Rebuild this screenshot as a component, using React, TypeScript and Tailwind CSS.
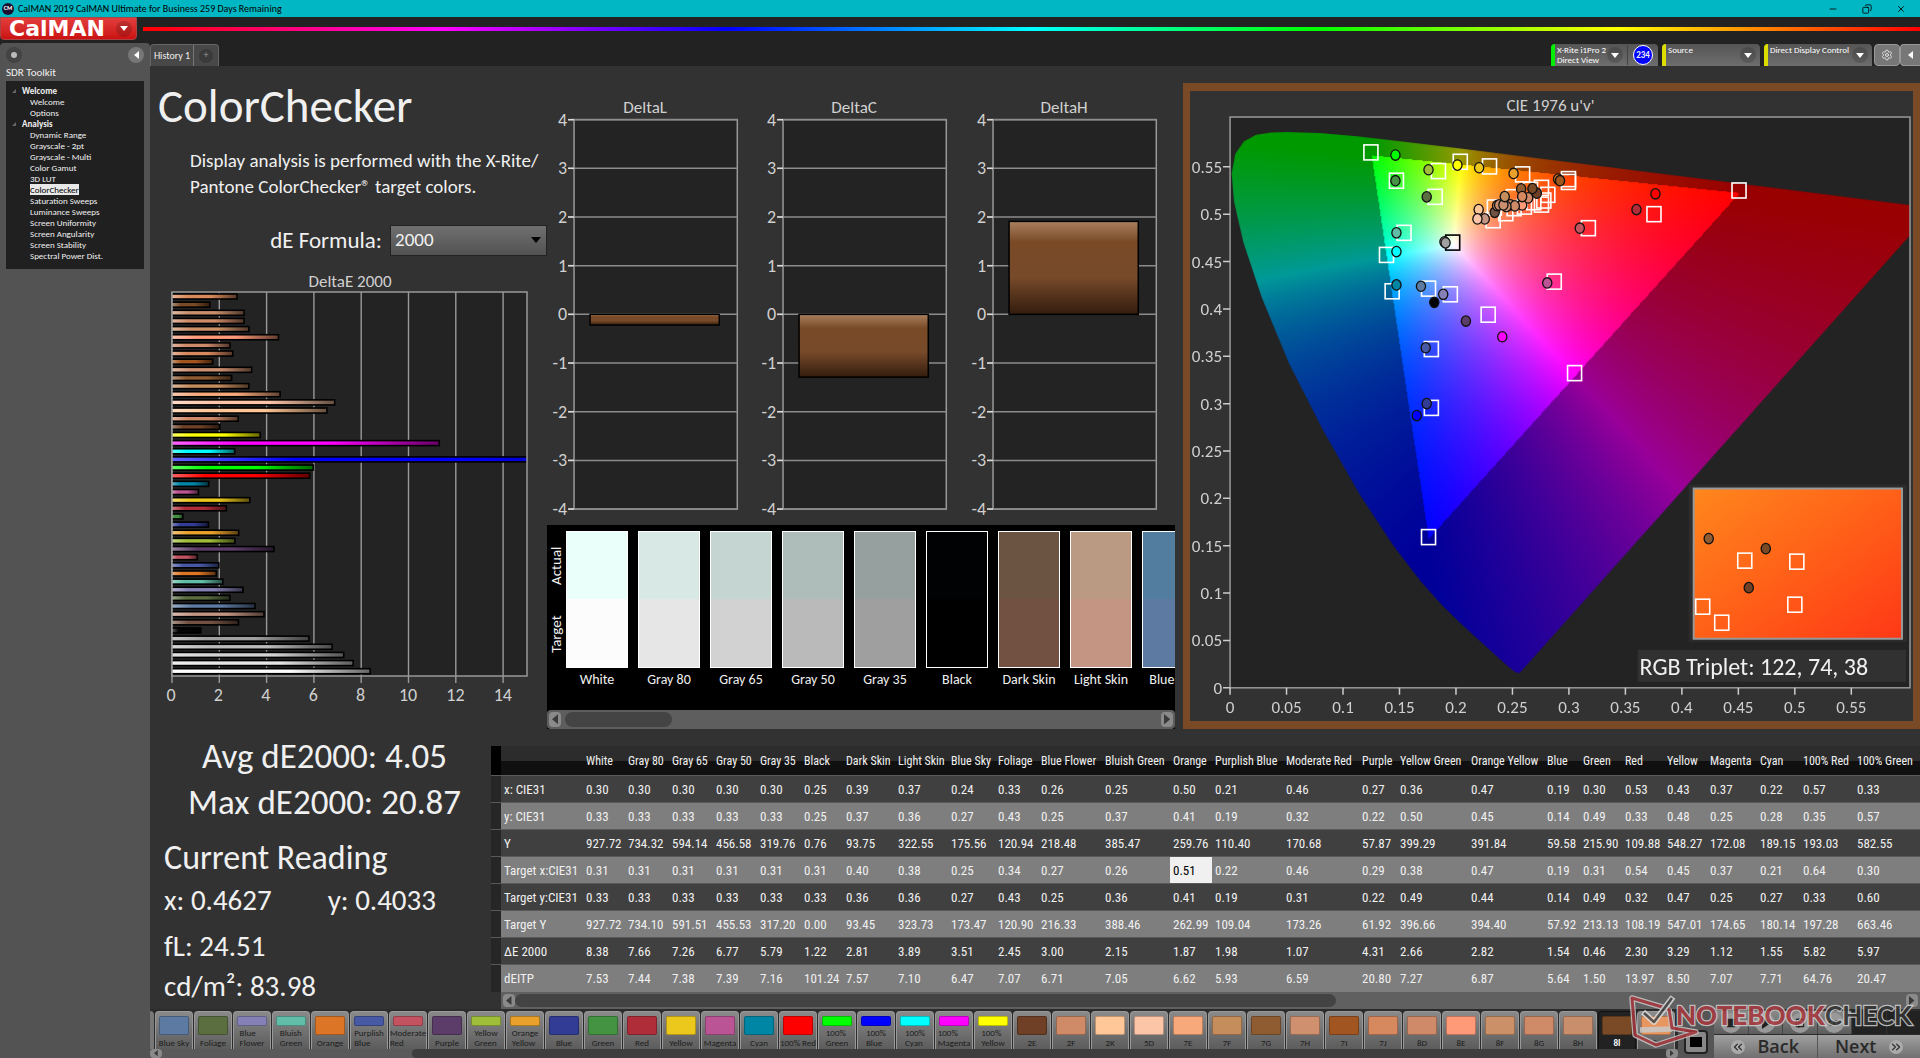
import React from 'react';
import { ChevronsLeft, ChevronsRight, Copy, Minus, Settings, X } from 'lucide-react';

const tree = [
  { title: 'Welcome', items: ['Welcome', 'Options'] },
  {
    title: 'Analysis',
    items: [
      'Dynamic Range',
      'Grayscale - 2pt',
      'Grayscale - Multi',
      'Color Gamut',
      '3D LUT',
      'ColorChecker',
      'Saturation Sweeps',
      'Luminance Sweeps',
      'Screen Uniformity',
      'Screen Angularity',
      'Screen Stability',
      'Spectral Power Dist.',
    ],
  },
];

// top to bottom
const deltaE: [string, number][] = [
  ['#d98a5c', 2.75], ['#7a4a26', 1.6], ['#c98f6c', 3.05], ['#cf8a68', 3.05], ['#cb9068', 3.25],
  ['#ff9a78', 4.5], ['#cf8a6a', 2.45], ['#d6885f', 2.57], ['#a15520', 1.72], ['#cf9070', 3.37],
  ['#8f5c32', 2.52], ['#c58c5c', 3.25], ['#f7a97c', 4.57], ['#fdc5a8', 6.88], ['#ffc697', 6.55],
  ['#cf8a68', 2.8], ['#6f4026', 2.02], ['#ffff00', 3.73], ['#ff00ff', 11.3], ['#00ffff', 2.65],
  ['#0000ff', 20.87], ['#00ff00', 5.97], ['#ff0000', 5.82], ['#0086a5', 1.55], ['#bb5494', 1.12],
  ['#ecc81d', 3.29], ['#af2d38', 2.3], ['#439343', 0.46], ['#323c94', 1.54], ['#e9a12b', 2.82],
  ['#9fbf3a', 2.66], ['#5c3c68', 4.31], ['#c35360', 1.07], ['#4759a5', 1.98], ['#dc7626', 1.87],
  ['#62bda8', 2.15], ['#8580b5', 3.0], ['#5a6e40', 2.45], ['#5d7ba2', 3.51], ['#c39582', 3.89],
  ['#735142', 2.81], ['#050505', 1.22], ['#a0a0a0', 5.79], ['#bababa', 6.77], ['#d2d2d2', 7.26],
  ['#e6e6e6', 7.66], ['#fcfcfc', 8.38],
];

const swatches = [
  { name: 'White', actual: '#eafffa', target: '#fcfcfc' },
  { name: 'Gray 80', actual: '#d8e8e4', target: '#e6e6e6' },
  { name: 'Gray 65', actual: '#c5d5d1', target: '#d2d2d2' },
  { name: 'Gray 50', actual: '#aebdba', target: '#bababa' },
  { name: 'Gray 35', actual: '#96a09e', target: '#9f9f9f' },
  { name: 'Black', actual: '#010203', target: '#000000' },
  { name: 'Dark Skin', actual: '#6c5442', target: '#735142' },
  { name: 'Light Skin', actual: '#ba9a82', target: '#c39582' },
  { name: 'Blue Sky', actual: '#537d9f', target: '#5d7ba2' },
];

const columns: { name: string; width: string; values: string[] }[] = [
  { name: 'White', width: 'w-[42px]', values: ['0.30', '0.33', '927.72', '0.31', '0.33', '927.72', '8.38', '7.53'] },
  { name: 'Gray 80', width: 'w-[44px]', values: ['0.30', '0.33', '734.32', '0.31', '0.33', '734.10', '7.66', '7.44'] },
  { name: 'Gray 65', width: 'w-[44px]', values: ['0.30', '0.33', '594.14', '0.31', '0.33', '591.51', '7.26', '7.38'] },
  { name: 'Gray 50', width: 'w-[44px]', values: ['0.30', '0.33', '456.58', '0.31', '0.33', '455.53', '6.77', '7.39'] },
  { name: 'Gray 35', width: 'w-[44px]', values: ['0.30', '0.33', '319.76', '0.31', '0.33', '317.20', '5.79', '7.16'] },
  { name: 'Black', width: 'w-[42px]', values: ['0.25', '0.25', '0.76', '0.31', '0.33', '0.00', '1.22', '101.24'] },
  { name: 'Dark Skin', width: 'w-[52px]', values: ['0.39', '0.37', '93.75', '0.40', '0.36', '93.45', '2.81', '7.57'] },
  { name: 'Light Skin', width: 'w-[53px]', values: ['0.37', '0.36', '322.55', '0.38', '0.36', '323.73', '3.89', '7.10'] },
  { name: 'Blue Sky', width: 'w-[47px]', values: ['0.24', '0.27', '175.56', '0.25', '0.27', '173.47', '3.51', '6.47'] },
  { name: 'Foliage', width: 'w-[43px]', values: ['0.33', '0.43', '120.94', '0.34', '0.43', '120.90', '2.45', '7.07'] },
  { name: 'Blue Flower', width: 'w-[64px]', values: ['0.26', '0.25', '218.48', '0.27', '0.25', '216.33', '3.00', '6.71'] },
  { name: 'Bluish Green', width: 'w-[68px]', values: ['0.25', '0.37', '385.47', '0.26', '0.36', '388.46', '2.15', '7.05'] },
  { name: 'Orange', width: 'w-[42px]', values: ['0.50', '0.41', '259.76', '0.51', '0.41', '262.99', '1.87', '6.62'] },
  { name: 'Purplish Blue', width: 'w-[71px]', values: ['0.21', '0.19', '110.40', '0.22', '0.19', '109.04', '1.98', '5.93'] },
  { name: 'Moderate Red', width: 'w-[76px]', values: ['0.46', '0.32', '170.68', '0.46', '0.31', '173.26', '1.07', '6.59'] },
  { name: 'Purple', width: 'w-[38px]', values: ['0.27', '0.22', '57.87', '0.29', '0.22', '61.92', '4.31', '20.80'] },
  { name: 'Yellow Green', width: 'w-[71px]', values: ['0.36', '0.50', '399.29', '0.38', '0.49', '396.66', '2.66', '7.27'] },
  { name: 'Orange Yellow', width: 'w-[76px]', values: ['0.47', '0.45', '391.84', '0.47', '0.44', '394.40', '2.82', '6.87'] },
  { name: 'Blue', width: 'w-[36px]', values: ['0.19', '0.14', '59.58', '0.19', '0.14', '57.92', '1.54', '5.64'] },
  { name: 'Green', width: 'w-[42px]', values: ['0.30', '0.49', '215.90', '0.31', '0.49', '213.13', '0.46', '1.50'] },
  { name: 'Red', width: 'w-[42px]', values: ['0.53', '0.33', '109.88', '0.54', '0.32', '108.19', '2.30', '13.97'] },
  { name: 'Yellow', width: 'w-[43px]', values: ['0.43', '0.48', '548.27', '0.45', '0.47', '547.01', '3.29', '8.50'] },
  { name: 'Magenta', width: 'w-[50px]', values: ['0.37', '0.25', '172.08', '0.37', '0.25', '174.65', '1.12', '7.07'] },
  { name: 'Cyan', width: 'w-[43px]', values: ['0.22', '0.28', '189.15', '0.21', '0.27', '180.14', '1.55', '7.71'] },
  { name: '100% Red', width: 'w-[54px]', values: ['0.57', '0.35', '193.03', '0.64', '0.33', '197.28', '5.82', '64.76'] },
  { name: '100% Green', width: '', values: ['0.33', '0.57', '582.55', '0.30', '0.60', '663.46', '5.97', '20.47'] },
];

const rowNames = ['x: CIE31', 'y: CIE31', 'Y', 'Target x:CIE31', 'Target y:CIE31', 'Target Y', 'ΔE 2000', 'dEITP'];

const patches: [string, string][] = [
  ['Blue Sky', '#5d7ba2'], ['Foliage', '#5a6e40'], ['Blue Flower', '#8580b5'], ['Bluish Green', '#62bda8'],
  ['Orange', '#dc7626'], ['Purplish Blue', '#4759a5'], ['Moderate Red', '#c35360'], ['Purple', '#5c3c68'],
  ['Yellow Green', '#9fbf3a'], ['Orange Yellow', '#e9a12b'], ['Blue', '#323c94'], ['Green', '#439343'],
  ['Red', '#af2d38'], ['Yellow', '#ecc81d'], ['Magenta', '#bb5494'], ['Cyan', '#0086a5'],
  ['100% Red', '#ff0000'], ['100% Green', '#00ff00'], ['100% Blue', '#0000ff'], ['100% Cyan', '#00ffff'],
  ['100% Magenta', '#ff00ff'], ['100% Yellow', '#ffff00'], ['2E', '#6f4026'], ['2F', '#cf8a68'],
  ['2K', '#ffc697'], ['5D', '#fdc5a8'], ['7E', '#f7a97c'], ['7F', '#c58c5c'], ['7G', '#8f5c32'],
  ['7H', '#cf9070'], ['7I', '#a15520'], ['7J', '#d6885f'], ['8D', '#cf8a6a'], ['8E', '#ff9a78'],
  ['8F', '#cb9068'], ['8G', '#cf8a68'], ['8H', '#c98f6c'], ['8I', '#7a4a26'], ['8J', '#e8965f'],
];

// u', v' of the spectral locus, 380nm to 700nm
const locus: [number, number][] = [
  [0.2569, 0.0165], [0.2546, 0.0157], [0.2522, 0.0169], [0.2461, 0.0226], [0.2347, 0.035], [0.2161, 0.0549],
  [0.2033, 0.0689], [0.1877, 0.0871], [0.1690, 0.1120], [0.1441, 0.151], [0.1147, 0.2044], [0.0828, 0.2708],
  [0.0521, 0.3427], [0.0282, 0.4117], [0.0119, 0.4699], [0.0035, 0.5131], [0.0014, 0.5432], [0.0046, 0.5638],
  [0.0123, 0.577], [0.0231, 0.5837], [0.036, 0.5861], [0.0501, 0.5868], [0.0792, 0.5856], [0.1127, 0.5821],
  [0.1531, 0.5766], [0.2026, 0.5694], [0.2623, 0.5604], [0.3315, 0.5501], [0.4035, 0.5393], [0.4691, 0.5296],
  [0.5203, 0.5219], [0.5565, 0.5165], [0.583, 0.5125], [0.6005, 0.5099], [0.6234, 0.5065],
];

const targets: [number, number][] = [
  [0.1247, 0.5652], [0.2038, 0.5553], [0.2297, 0.5504], [0.259, 0.542], [0.1845, 0.5455], [0.1473, 0.5353],
  [0.1816, 0.5183], [0.154, 0.4803], [0.1385, 0.457], [0.1435, 0.4186], [0.1757, 0.4214], [0.195, 0.4154],
  [0.2285, 0.3939], [0.1782, 0.3576], [0.287, 0.4288], [0.3172, 0.4852], [0.3753, 0.5], [0.4506, 0.525],
  [0.305, 0.3322], [0.2996, 0.537], [0.2996, 0.534], [0.1782, 0.2955], [0.1757, 0.1591], [0.2813, 0.5204],
  [0.2757, 0.5278], [0.2757, 0.5101], [0.2778, 0.5144], [0.266, 0.5257], [0.2509, 0.5179], [0.234, 0.507],
  [0.2329, 0.4936], [0.2441, 0.501], [0.2515, 0.5063], [0.2606, 0.508], [0.2689, 0.5126],
];

const readings: [number, number, string][] = [
  [0.1464, 0.5624, '#00ff00'], [0.2013, 0.5518, '#ffff00'], [0.2205, 0.549, '#ecc81d'], [0.1757, 0.5469, '#9fbf3a'],
  [0.251, 0.543, '#e9a12b'], [0.1464, 0.5353, '#439343'], [0.1741, 0.5183, '#5a6e40'], [0.1473, 0.4803, '#62bda8'],
  [0.1473, 0.4605, '#00ffff'], [0.1473, 0.4253, '#0086a5'], [0.169, 0.4239, '#5d7ba2'], [0.1887, 0.4154, '#8580b5'],
  [0.1808, 0.4069, '#000000'], [0.2088, 0.3872, '#5c3c68'], [0.241, 0.3706, '#ff00ff'], [0.1732, 0.359, '#4759a5'],
  [0.2808, 0.4274, '#bb5494'], [0.3096, 0.4852, '#c35360'], [0.3598, 0.5049, '#af2d38'], [0.3766, 0.5215, '#ff0000'],
  [0.2904, 0.537, '#dc7626'], [0.2921, 0.5353, '#9f5720'], [0.1898, 0.4708, '#d2d2d2'], [0.1908, 0.4697, '#a0a0a0'],
  [0.1741, 0.3001, '#323c94'], [0.1653, 0.2874, '#0000ff'], [0.2343, 0.502, '#735142'], [0.2364, 0.5091, '#c98d6c'],
  [0.2382, 0.5098, '#c98d6c'], [0.2482, 0.5098, '#cf9070'], [0.2586, 0.5098, '#ff9a78'], [0.2521, 0.5087, '#cf8a68'],
  [0.2447, 0.508, '#cb8f6e'], [0.242, 0.5098, '#cb8f6e'], [0.2432, 0.5186, '#c58c5c'], [0.2577, 0.5267, '#8f5c32'],
  [0.2716, 0.5221, '#6f4026'], [0.2677, 0.5271, '#7a4a26'], [0.2639, 0.5172, '#d18a6a'], [0.2586, 0.5186, '#d6885f'],
  [0.2201, 0.5049, '#ffc697'], [0.2255, 0.495, '#c39582'], [0.219, 0.495, '#fdc5a8'],
];

const PLOT_W = 679;
const PLOT_H = 570;
const U_SCALE = 1128;
const V_SCALE = 946;

const Chromaticity = () => {
  const ref = React.useRef<HTMLCanvasElement>(null);

  React.useLayoutEffect(() => {
    const canvas = ref.current;
    const ctx = canvas?.getContext('2d');
    if (!canvas || !ctx) return;

    const fill = document.createElement('canvas');
    fill.width = PLOT_W;
    fill.height = PLOT_H;
    const fillCtx = fill.getContext('2d')!;
    const image = fillCtx.createImageData(PLOT_W, PLOT_H);
    for (let py = 0; py < PLOT_H; py++) {
      for (let px = 0; px < PLOT_W; px++) {
        const u = px / U_SCALE;
        const v = Math.max((PLOT_H - py) / V_SCALE, 0.001);
        // u'v' -> XYZ with Y = 1
        const x = (9 * u) / (4 * v);
        const z = (12 - 3 * u - 20 * v) / (4 * v);
        let r = 3.2406 * x - 1.5372 - 0.4986 * z;
        let g = -0.9689 * x + 1.8758 + 0.0415 * z;
        let b = 0.0557 * x - 0.204 + 1.057 * z;
        const inside = r >= 0 && g >= 0 && b >= 0;
        r = Math.max(r, 0);
        g = Math.max(g, 0);
        b = Math.max(b, 0);
        const k = (inside ? 255 : 153) / Math.max(r, g, b);
        const i = (py * PLOT_W + px) * 4;
        image.data[i] = r * k;
        image.data[i + 1] = g * k;
        image.data[i + 2] = b * k;
        image.data[i + 3] = 255;
      }
    }
    fillCtx.putImageData(image, 0, 0);

    ctx.clearRect(0, 0, PLOT_W, PLOT_H);
    ctx.save();
    ctx.beginPath();
    locus.forEach(([u, v]) => ctx.lineTo(u * U_SCALE, PLOT_H - v * V_SCALE));
    ctx.closePath();
    ctx.clip();
    ctx.drawImage(fill, 0, 0);
    ctx.restore();
  }, []);

  return <canvas ref={ref} width={PLOT_W} height={PLOT_H} className="block" />;
};

const Target = ({ x, y, stroke = '#fff' }: { x: number; y: number; stroke?: string }) => (
  <rect x={x - 7} y={y - 7.5} width="14" height="15" fill="none" stroke={stroke} strokeWidth="1.6" />
);

const Reading = ({ x, y, fill }: { x: number; y: number; fill: string }) => (
  <ellipse cx={x} cy={y} rx="4.6" ry="5.2" fill={fill} stroke="#111" strokeWidth="1.3" />
);

const CieChart = () => {
  const px = (u: number) => 40 + u * U_SCALE;
  const py = (v: number) => 596 - v * V_SCALE;
  const ticks = Array.from({ length: 12 }, (_, i) => i * 5);
  return (
    <svg viewBox="0 0 722 629" className="block w-full" role="img" aria-label="CIE 1976 u'v' chart">
      <defs>
        <linearGradient id="inset" x1="0" y1="0" x2="1" y2="1">
          <stop offset="0" stopColor="#ff871d" />
          <stop offset="0.5" stopColor="#ff6018" />
          <stop offset="1" stopColor="#ff3816" />
        </linearGradient>
      </defs>
      <text x="360" y="20" textAnchor="middle" fontSize="17" fill="#d0d0d0">CIE 1976 u'v'</text>
      <rect x="40" y="26" width={PLOT_W} height={PLOT_H} fill="#232323" />
      <foreignObject x="40" y="26" width={PLOT_W} height={PLOT_H}>
        <Chromaticity />
      </foreignObject>
      <rect x="40" y="26" width={PLOT_W} height={PLOT_H} fill="none" stroke="#999" strokeWidth="1.5" />
      {ticks.map((t) => (
        <g key={t} fill="#d0d0d0" fontSize="17">
          <path d={`M33 ${py(t / 100)}h7M${px(t / 100)} 596v7`} stroke="#ccc" strokeWidth="1.5" />
          <text x="32" y={py(t / 100) + 6} textAnchor="end">{t / 100}</text>
          <text x={px(t / 100)} y="621" textAnchor="middle">{t / 100}</text>
        </g>
      ))}
      {targets.map(([u, v], i) => (
        <Target key={i} x={px(u)} y={py(v)} />
      ))}
      <Target x={px(0.1971)} y={py(0.47)} stroke="#000" />
      {readings.map(([u, v, c], i) => (
        <Reading key={i} x={px(u)} y={py(v)} fill={c} />
      ))}

      <rect x="498" y="393" width="218" height="157" fill="#2c2c2c" />
      <rect x="503" y="397" width="208" height="150" fill="url(#inset)" stroke="#999" strokeWidth="2" />
      <Target x={554} y={469} />
      <Target x={606} y={470} />
      <Target x={604} y={513} />
      <Target x={512} y={515} />
      <Target x={531} y={531} />
      <Reading x={518} y={447} fill="#8f5c32" />
      <Reading x={575} y={457} fill="#7a4a26" />
      <Reading x={558} y={496} fill="#6f4026" />

      <rect x="447" y="558" width="268" height="32" fill="#313131" />
      <text x="449" y="583" fontSize="24" fill="#f0f0f0">RGB Triplet: 122, 74, 38</text>
    </svg>
  );
};

const DeltaChart = ({ title, value }: { title: string; value: number }) => {
  const y = (v: number) => 224 - v * 48.6;
  const top = Math.min(y(value), y(0));
  return (
    <svg viewBox="0 0 209 430" className="block w-full" role="img" aria-label={title}>
      <defs>
        <linearGradient id="bar" x1="0" y1="0" x2="0" y2="1">
          <stop offset="0" stopColor="#a9805f" />
          <stop offset="0.22" stopColor="#7a4a26" />
          <stop offset="0.6" stopColor="#774a2a" />
          <stop offset="1" stopColor="#331c0d" />
        </linearGradient>
      </defs>
      <text x="98" y="23" textAnchor="middle" fontSize="17" fill="#d0d0d0">{title}</text>
      <rect x="27" y="29.5" width="163" height="389" fill="#232323" stroke="#999" strokeWidth="1.5" />
      {[4, 3, 2, 1, 0, -1, -2, -3, -4].map((t) => (
        <g key={t}>
          <path d={`M21 ${y(t)}H190`} stroke="#8c8c8c" strokeWidth="1.5" />
          <path d={`M21 ${y(t)}h6`} stroke="#ddd" strokeWidth="1.5" />
          <text x="20" y={y(t) + 6} textAnchor="end" fontSize="18" fill="#d0d0d0">{t}</text>
        </g>
      ))}
      <rect x="43" y={top} width="129" height={Math.abs(value) * 48.6} fill="url(#bar)" stroke="#000" strokeWidth="1.5" />
    </svg>
  );
};

const DeltaEChart = () => (
  <svg viewBox="0 0 397 450" className="block w-full" role="img" aria-label="DeltaE 2000">
    <defs>
      <linearGradient id="gloss" x1="0" y1="0" x2="1" y2="0">
        <stop offset="0" stopColor="#fff" stopOpacity="0.4" />
        <stop offset="0.25" stopColor="#fff" stopOpacity="0" />
        <stop offset="0.6" stopColor="#000" stopOpacity="0" />
        <stop offset="1" stopColor="#000" stopOpacity="0.6" />
      </linearGradient>
      <clipPath id="plot">
        <rect x="22" y="22" width="355" height="384" />
      </clipPath>
    </defs>
    <text x="200" y="17" textAnchor="middle" fontSize="17" fill="#d0d0d0">DeltaE 2000</text>
    <rect x="22" y="22" width="355" height="384" fill="#232323" />
    {[0, 2, 4, 6, 8, 10, 12, 14].map((t) => (
      <g key={t}>
        <path d={`M${22 + t * 23.65} 22V413`} stroke="#999" strokeWidth="1.4" />
        <text x={21 + t * 23.7} y="431" textAnchor="middle" fontSize="18" fill="#d0d0d0">{t}</text>
      </g>
    ))}
    <g clipPath="url(#plot)">
      {deltaE.map(([color, value], i) => (
        <g key={i}>
          <rect x="21" y={24 + i * 8.146} width={value * 23.65 + 1} height="5" fill={color} />
          <rect x="21" y={24 + i * 8.146} width={value * 23.65 + 1} height="5" fill="url(#gloss)" stroke="#000" strokeWidth="1.6" />
        </g>
      ))}
    </g>
    <rect x="22" y="22" width="355" height="384" fill="none" stroke="#999" strokeWidth="1.5" />
  </svg>
);

const Caret = () => (
  <span className="flex size-4 items-center justify-center rounded-full bg-black/15">
    <svg viewBox="0 0 8 5" className="w-2 fill-white"><path d="M0 0h8L4 5z" /></svg>
  </span>
);

const ScrollArrow = ({ dir, label }: { dir: 'left' | 'right'; label: string }) => (
  <button aria-label={label} className="flex h-full w-3 shrink-0 items-center justify-center rounded-sm bg-[#8a8a8a]">
    <svg viewBox="0 0 6 10" className="h-[70%] fill-[#3a3a3a]">
      <path d={dir === 'left' ? 'M6 0v10L0 5z' : 'M0 0v10l6-5z'} />
    </svg>
  </button>
);

const Device = ({ color, lines, children }: { color: string; lines: string[]; children?: React.ReactNode }) => (
  <div className="flex h-[22px] items-center rounded-t bg-linear-to-b from-[#555] to-[#6e6e6e]">
    <span className={`h-full w-1 rounded-tl ${color}`} />
    <button className="flex h-full w-[72px] grow items-center justify-between pr-1 pl-0.5 text-left text-[9px] leading-[10px] whitespace-nowrap text-white">
      <span className="h-full pt-px">
        {lines.map((l) => (
          <span key={l} className="block">{l}</span>
        ))}
      </span>
      <Caret />
    </button>
    {children}
  </div>
);

const Watermark = () => (
  <svg viewBox="0 0 310 73" className="pointer-events-none absolute right-0 bottom-0 w-[310px] opacity-85" role="img" aria-label="Notebookcheck">
    <g fill="none" strokeLinejoin="round">
      <path d="M59 24L22 13l3 37 21 10 40-13-24-4-3-19M30 45l32-1" stroke="#c9c9c9" strokeWidth="5.5" />
      <path d="M59 24L22 13l3 37 21 10 40-13-24-4-3-19" stroke="#a9383e" strokeWidth="3" />
      <path d="M33 27l11 10 19-25" stroke="#d8d8d8" strokeWidth="6" />
      <path d="M34 28l10 9 18-24" stroke="#444" strokeWidth="2.5" />
    </g>
    <g fontFamily="Lato, sans-serif" fontSize="26" stroke="#cfcfcf" strokeWidth="2.5" paintOrder="stroke">
      <text x="66" y="40" fontWeight="900" fill="#a9383e">NOTEBOOK</text>
      <text x="215" y="40" fill="#333" fontWeight="700">CHECK</text>
    </g>
  </svg>
);

const App = () => {
  return (
    <div className="flex min-h-screen flex-col overflow-hidden bg-[#222] font-['Carlito','Lato',sans-serif] text-[#f0f0f0]">
      {/* Title bar */}
      <div className="flex h-[17px] items-center bg-[#00b7c3] text-black">
        <span className="ml-0.5 flex size-3 items-center justify-center rounded-full bg-[#1b1030] text-[6px] font-bold text-white">CM</span>
        <span className="ml-1 text-[10px] leading-4">CalMAN 2019 CalMAN Ultimate for Business 259 Days Remaining</span>
        <div className="ml-auto flex gap-6 pr-3.5">
          <button aria-label="Minimize"><Minus className="size-2.5" /></button>
          <button aria-label="Restore"><Copy className="size-2.5 -scale-x-100" /></button>
          <button aria-label="Close"><X className="size-2.5" /></button>
        </div>
      </div>

      {/* Logo and rainbow */}
      <div className="flex h-[26px] items-start">
        <button className="flex h-[23px] w-[137px] items-center justify-between rounded-b-sm border border-[#a44] bg-linear-to-b from-[#e23c3c] to-[#cb1010] pr-1 pl-2">
          <span className="font-['DejaVu_Sans',sans-serif] text-[22px] leading-5 font-bold text-white">CalMAN</span>
          <Caret />
        </button>
        <span className="mt-2.5 ml-1.5 h-1 grow bg-[linear-gradient(to_right,#f00,#f0f_17%,#00f_33%,#0ff_50%,#0f0_66%,#ff0_83%,#f00)]" />
      </div>

      <div className="flex grow">
        {/* Workflow tree */}
        <aside className="w-[150px] shrink-0 rounded-t bg-[#535353] px-1.5 pt-1">
          <div className="flex items-center justify-between">
            <button aria-label="Record" className="flex size-4 items-center justify-center rounded-full bg-[#444]">
              <span className="size-1.5 rounded-full bg-[#bbb]" />
            </button>
            <button aria-label="Collapse" className="flex size-4 items-center justify-center rounded-full bg-[#777]">
              <svg viewBox="0 0 5 8" className="h-2 fill-white"><path d="M5 0v8L0 4z" /></svg>
            </button>
          </div>
          <h2 className="mt-0.5 text-[11px] leading-4">SDR Toolkit</h2>
          <nav className="bg-[#202020] px-1.5 pt-1 pb-2 text-[9px] leading-[11px]">
            {tree.map((group) => (
              <div key={group.title}>
                <div className="flex items-center font-bold">
                  <svg viewBox="0 0 4 4" className="mr-1.5 w-1 fill-[#666]"><path d="M4 0v4H0z" /></svg>
                  {group.title}
                </div>
                {group.items.map((item) => (
                  <a key={item} href="#" className="ml-[18px] block leading-[11px]">
                    <span className={item === 'ColorChecker' ? 'bg-[#e8e8e8] text-black' : ''}>{item}</span>
                  </a>
                ))}
              </div>
            ))}
          </nav>
        </aside>

        <main className="flex min-w-0 grow flex-col bg-[#323232]">
          {/* Tabs and devices */}
          <div className="flex h-[23px] items-end justify-between bg-[#222]">
            <div className="flex h-[22px] rounded-t border border-b-0 border-[#666] bg-[#484848]">
              <button className="w-[43px] border-r border-[#777] text-[10px]">History 1</button>
              <button aria-label="Add tab" className="flex w-6 items-center justify-center text-[10px] text-[#999]">
                <span className="size-3.5 rounded-full bg-[#3a3a3a] leading-3">+</span>
              </button>
            </div>
            <div className="flex items-end gap-1">
              <Device color="bg-[#0e0]" lines={['X-Rite i1Pro 2', 'Direct View']}>
                <span className="flex w-[31px] items-center justify-center border-l border-[#444]">
                  <span className="flex size-5 items-center justify-center rounded-full border border-white bg-[#00f] text-[9px] font-bold">234</span>
                </span>
              </Device>
              <div className="flex w-[98px]"><div className="grow"><Device color="bg-[#dd0]" lines={['Source']} /></div></div>
              <div className="flex w-[108px]"><div className="grow"><Device color="bg-[#dd0]" lines={['Direct Display Control']} /></div></div>
              <div className="-ml-0.5 flex h-[22px]">
                <button aria-label="Settings" className="flex w-[26px] items-center justify-center rounded border border-[#999] bg-[#777]">
                  <Settings className="size-3 text-[#ddd]" />
                </button>
                <button aria-label="Hide devices" className="flex w-5 items-center justify-center rounded-l border border-r-0 border-[#999] bg-[#777]">
                  <svg viewBox="0 0 5 8" className="h-2 fill-white"><path d="M5 0v8L0 4z" /></svg>
                </button>
              </div>
            </div>
          </div>

          {/* Charts */}
          <section className="grid grid-cols-[minmax(0,397fr)_minmax(0,636fr)_minmax(0,737fr)] pb-[7px]">
            <div>
              <h1 className="mt-2.5 ml-2 text-[47px] leading-[60px]">ColorChecker</h1>
              <p className="mt-3 ml-10 text-[19px] leading-[26px] whitespace-nowrap">
                Display analysis is performed with the X-Rite/
                <br />
                Pantone ColorChecker® target colors.
              </p>
              <div className="mt-[25px] flex items-center justify-end gap-2">
                <label htmlFor="formula" className="text-[23px] leading-[29px]">dE Formula:</label>
                <span className="relative w-[157px]">
                  <select id="formula" className="block h-[31px] w-full appearance-none border border-[#222] bg-linear-to-b from-[#707070] to-[#525252] pl-1 text-[19px]">
                    <option>2000</option>
                  </select>
                  <svg viewBox="0 0 10 6" className="pointer-events-none absolute top-3 right-1.5 w-2.5 fill-black"><path d="M0 0h10L5 6z" /></svg>
                </span>
              </div>
              <div className="mt-3.5">
                <DeltaEChart />
              </div>
            </div>

            <div className="pt-6 pr-2">
              <div className="grid grid-cols-3">
                <DeltaChart title="DeltaL" value={-0.22} />
                <DeltaChart title="DeltaC" value={-1.29} />
                <DeltaChart title="DeltaH" value={1.91} />
              </div>
              <div className="mt-1 bg-black">
                <div className="flex h-[185px] overflow-hidden pt-1.5">
                  <div className="flex h-[137px] w-[19px] shrink-0 rotate-180 flex-row-reverse text-[15px] leading-[19px] [writing-mode:vertical-rl]">
                    <span className="flex h-full w-full justify-around">
                      <span>Target</span>
                      <span>Actual</span>
                    </span>
                  </div>
                  <div className="flex gap-2.5">
                    {swatches.map((s) => (
                      <div key={s.name} className="w-[62px] shrink-0 text-center text-[14px] leading-6 whitespace-nowrap">
                        <div className="flex h-[137px] flex-col border border-white">
                          <div className="grow" style={{ backgroundColor: s.actual }} />
                          <div className="grow" style={{ backgroundColor: s.target }} />
                        </div>
                        {s.name}
                      </div>
                    ))}
                  </div>
                </div>
                <div className="flex h-[19px] rounded-sm bg-[#5e5e5e] p-0.5">
                  <ScrollArrow dir="left" label="Scroll swatches left" />
                  <span className="ml-1 w-[107px] rounded-lg bg-[#444]" />
                  <span className="grow" />
                  <ScrollArrow dir="right" label="Scroll swatches right" />
                </div>
              </div>
            </div>

            <div className="mt-[17px] self-start border-x-[7px] border-y-8 border-[#7a4a26]">
              <CieChart />
            </div>
          </section>

          {/* Readings and table */}
          <section className="flex">
            <div className="w-[341px] shrink-0 pl-3.5 leading-10">
              <p className="pl-[38px] text-[35px] leading-10">Avg dE2000: 4.05</p>
              <p className="mt-1.5 pl-6 text-[35px] leading-10">Max dE2000: 20.87</p>
              <h2 className="mt-4 text-[34px] leading-10">Current Reading</h2>
              <p className="mt-0.5 flex gap-14 text-[29px] leading-10">
                <span>x: 0.4627</span>
                <span>y: 0.4033</span>
              </p>
              <p className="mt-1.5 text-[29px] leading-10">fL: 24.51</p>
              <p className="text-[29px] leading-10">cd/m²: 83.98</p>
            </div>
            <div className="mt-2.5 min-w-0 grow">
              <table className="w-full table-fixed text-left font-['Roboto_Condensed','Roboto',sans-serif] text-[13px] whitespace-nowrap">
                <thead>
                  <tr className="h-[30px] bg-[linear-gradient(#2c2c2c_50%,#101010_50%)] text-[12px]">
                    <th className="w-2.5 bg-black" />
                    <th className="w-[82px]" />
                    {columns.map((c) => (
                      <th key={c.name} scope="col" className={`pl-[3px] font-normal ${c.width}`}>{c.name}</th>
                    ))}
                  </tr>
                </thead>
                <tbody>
                  {rowNames.map((name, row) => (
                    <tr key={name} className={`h-[27px] border-t border-[#5a5a5a] ${row % 2 ? 'bg-[#7e7e7e]' : 'bg-[#404040]'}`}>
                      <td className="bg-[#262626]" />
                      <th scope="row" className="pl-[3px] font-normal">{name}</th>
                      {columns.map((c) => (
                        <td
                          key={c.name}
                          className={`pl-[3px] ${row === 3 && c.name === 'Orange' ? 'bg-[#f0f0f0] text-black' : ''}`}
                        >
                          {c.values[row]}
                        </td>
                      ))}
                    </tr>
                  ))}
                </tbody>
              </table>
              <div className="ml-2.5 flex h-[17px] bg-[#606060] p-0.5">
                <ScrollArrow dir="left" label="Scroll table left" />
                <span className="w-[58%] rounded-lg bg-[#434343]" />
                <span className="grow" />
                <ScrollArrow dir="right" label="Scroll table right" />
              </div>
            </div>
          </section>

          {/* Patches and navigation */}
          <footer className="relative mt-auto flex h-[49px] bg-[#2b2b2b]">
            <div className="flex min-w-0 grow flex-col">
              <div className="flex h-10 gap-px overflow-hidden pt-0.5">
                <span className="w-1 shrink-0 rounded-tr bg-[#777]" />
                {patches.map(([name, color]) => {
                  const twoLines = name.includes(' ') && name !== 'Blue Sky' && name !== '100% Red';
                  return (
                    <button
                      key={name}
                      className={`flex w-[38px] shrink-0 flex-col items-center justify-between rounded-t border border-b-0 pt-1 pb-px text-[9px] leading-[10px] ${
                        name === '8I'
                          ? 'border-[#111] bg-[#222] font-bold text-white'
                          : 'border-[#999] bg-linear-to-b from-[#8a8a8a] to-[#5c5c5c] text-[#1c1c1c]'
                      }`}
                    >
                      <span
                        className={`w-[30px] rounded-xs border border-black/25 ${twoLines ? 'h-2.5' : 'h-[19px]'}`}
                        style={{ backgroundColor: color }}
                      />
                      <span className={twoLines ? 'w-min text-left' : 'whitespace-nowrap'}>{name}</span>
                    </button>
                  );
                })}
              </div>
              <div className="flex h-[9px] bg-[#5a5a5a]">
                <ScrollArrow dir="left" label="Scroll patches left" />
                <span className="w-[250px] shrink-0" />
                <span className="grow rounded-l-full bg-[#3e3e3e]" />
                <ScrollArrow dir="right" label="Scroll patches right" />
              </div>
            </div>
            <div className="flex w-9 shrink-0 items-end justify-center bg-[#555] pb-1">
              <button aria-label="Stop" className="flex size-6 items-center justify-center rounded border-2 border-[#222] bg-[#888]">
                <span className="h-2.5 w-3 bg-black" />
              </button>
            </div>
            <div className="flex w-[206px] shrink-0 flex-col gap-px">
              <div className="flex h-[25px] pt-0.5">
                {['M2 2h6v6H2z', 'M3 1l6 4-6 4z', 'M2 2h6v6H2zM4 1v8', 'M1 5a2 2 0 014 0 2 2 0 004 0 2 2 0 00-4 0 2 2 0 01-4 0'].map((d, i) => (
                  <button key={d} aria-label={['Stop reading', 'Read', 'Read step', 'Read continuous'][i]} className="flex flex-1 items-center justify-center border-r border-[#444] bg-linear-to-b from-[#8a8a8a] to-[#5c5c5c]">
                    <span className="flex size-5 items-center justify-center rounded-full bg-[#999]">
                      <svg viewBox="0 0 10 10" className={`size-3 stroke-[#222] ${i < 2 ? 'fill-[#222]' : 'fill-none'}`}><path d={d} /></svg>
                    </span>
                  </button>
                ))}
                <span className="flex-1 border-r border-[#333] bg-[#222]" />
                <span className="flex-1 bg-[#222]" />
              </div>
              <div className="flex grow font-['Open_Sans',sans-serif] text-[18px] leading-[23px] font-semibold text-[#2a2a2a]">
                <button className="flex flex-1 items-center justify-center gap-3 border-r border-[#555] bg-linear-to-b from-[#a0a0a0] to-[#707070]">
                  <span className="rounded-full bg-[#aaa]"><ChevronsLeft className="size-3.5" /></span>
                  Back
                </button>
                <button className="flex flex-1 items-center justify-center gap-3 bg-linear-to-b from-[#a0a0a0] to-[#707070]">
                  Next
                  <span className="rounded-full bg-[#aaa]"><ChevronsRight className="size-3.5" /></span>
                </button>
              </div>
            </div>
            <Watermark />
          </footer>
        </main>
      </div>
    </div>
  );
};

export default App;
